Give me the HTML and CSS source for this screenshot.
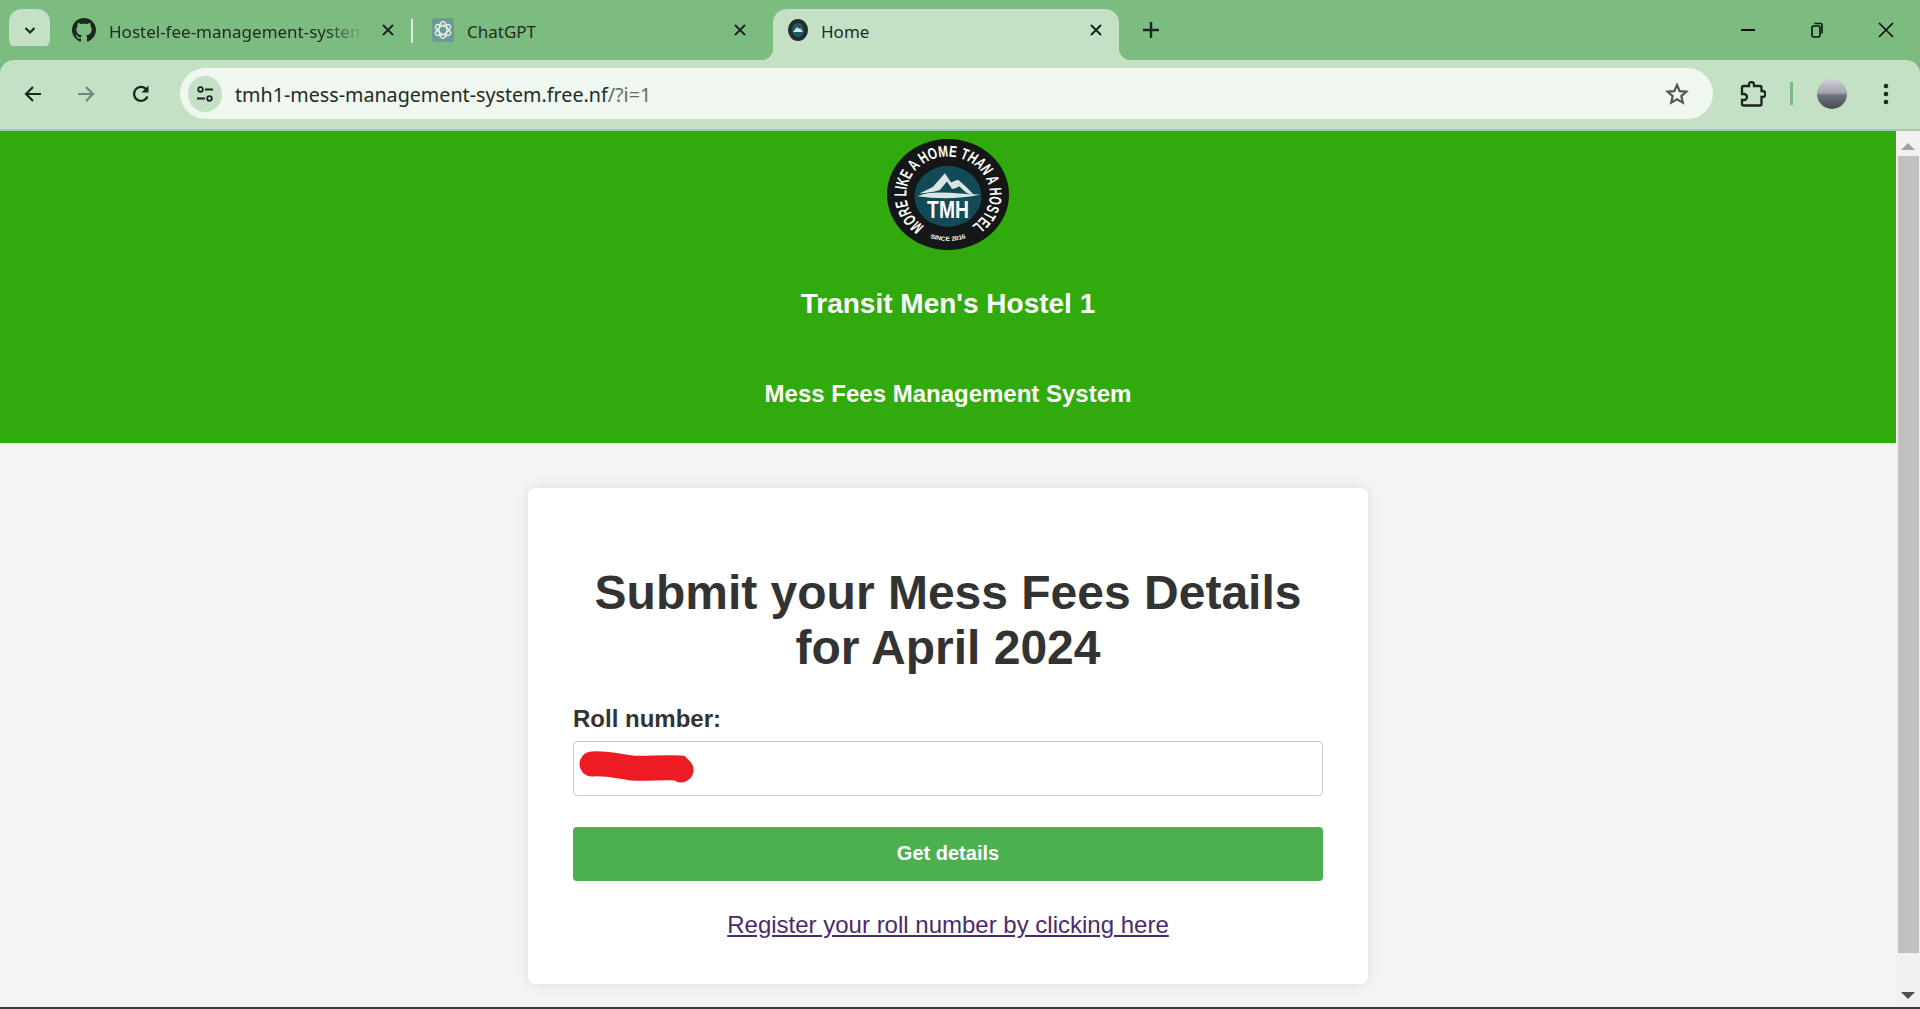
FILE: index.html
```html
<!DOCTYPE html>
<html lang="en">
<head>
    <meta charset="UTF-8">
    <title>Home</title>
    <link rel="stylesheet" href="styles.css">
</head>
<body>
    <div class="tabstrip">
        <div class="tab-search">
            <svg width="14" height="14" viewBox="0 0 14 14"><path d="M2.5 5l4.500 4.500L11.500 5" fill="none" stroke="#1f2a20" stroke-width="2.200"/></svg>
        </div>
        <div class="tab tab-first">
            <svg class="favicon" width="24" height="24" viewBox="0 0 16 16"><path fill="#1d261e" d="M8 0C3.58 0 0 3.580 0 8c0 3.540 2.290 6.530 5.470 7.590.4.070.55-.17.55-.38 0-.19-.01-.82-.01-1.490-2.010.37-2.530-.49-2.690-.94-.09-.23-.48-.94-.82-1.130-.28-.15-.68-.52-.01-.53.63-.01 1.080.58 1.230.82.72 1.210 1.870.87 2.330.66.07-.52.28-.87.51-1.070-1.780-.2-3.640-.89-3.640-3.950 0-.87.31-1.590.82-2.150-.08-.2-.36-1.020.08-2.120 0 0 .67-.21 2.200.82.64-.18 1.320-.27 2-.27.68 0 1.360.09 2 .27 1.530-1.040 2.200-.82 2.200-.82.44 1.100.16 1.920.08 2.120.51.56.82 1.270.82 2.150 0 3.070-1.870 3.750-3.650 3.950.29.25.54.73.54 1.480 0 1.070-.01 1.930-.01 2.200 0 .21.15.46.55.38A8.013 8.013 0 0016 8c0-4.420-3.580-8-8-8z"/></svg>
            <span class="tab-title tab-title-fade">Hostel-fee-management-system</span>
            <svg class="tab-close" width="14" height="14" viewBox="0 0 14 14"><path d="M2 2l10 10M12 2L2 12" stroke="#1d261e" stroke-width="2"/></svg>
        </div>
        <div class="tab-sep"></div>
        <div class="tab tab-second">
            <svg class="favicon" width="22" height="24" viewBox="0 0 22 24">
                <rect width="22" height="24" rx="2" fill="#6d9c95"/>
                <g fill="none" stroke="#e8f3ef" stroke-width="1.300">
                    <ellipse cx="11" cy="12" rx="4" ry="8.500"/>
                    <ellipse cx="11" cy="12" rx="4" ry="8.500" transform="rotate(60 11 12)"/>
                    <ellipse cx="11" cy="12" rx="4" ry="8.500" transform="rotate(120 11 12)"/>
                </g>
            </svg>
            <span class="tab-title">ChatGPT</span>
            <svg class="tab-close" width="14" height="14" viewBox="0 0 14 14"><path d="M2 2l10 10M12 2L2 12" stroke="#1d261e" stroke-width="2"/></svg>
        </div>
        <div class="tab tab-active">
            <svg class="favicon" width="20" height="24" viewBox="0 0 20 24">
                <ellipse cx="10" cy="12" rx="10" ry="11" fill="#222d2c"/>
                <ellipse cx="10" cy="12" rx="6" ry="7" fill="#1f5868"/>
                <path d="M5 14l4-5 2 2 1-1 3 4z" fill="#d5e4e4"/>
            </svg>
            <span class="tab-title">Home</span>
            <svg class="tab-close" width="14" height="14" viewBox="0 0 14 14"><path d="M2 2l10 10M12 2L2 12" stroke="#1d261e" stroke-width="2"/></svg>
        </div>
        <svg class="new-tab" width="18" height="18" viewBox="0 0 18 18"><path d="M9 1v16M1 9h16" stroke="#1d261e" stroke-width="2.400"/></svg>
        <div class="window-controls">
            <svg width="16" height="16" viewBox="0 0 16 16"><path d="M1 8h14" stroke="#111" stroke-width="2"/></svg>
            <svg width="16" height="18" viewBox="0 0 16 18"><path d="M3 6.500a1.500 1.500 0 011.500-1.500h5A1.500 1.500 0 0111 6.500v8a1.500 1.500 0 01-1.500 1.500h-5A1.500 1.500 0 013 14.500zM5.500 2.500h6A1.500 1.500 0 0113 4v8.500" fill="none" stroke="#111" stroke-width="1.600"/></svg>
            <svg width="16" height="16" viewBox="0 0 16 16"><path d="M1 1l14 14M15 1L1 15" stroke="#111" stroke-width="1.700"/></svg>
        </div>
    </div>

    <div class="toolbar">
        <svg class="nav-icon" width="20" height="20" viewBox="0 0 20 20"><path d="M18 10H3M10 3l-7 7 7 7" fill="none" stroke="#1d261e" stroke-width="2.200"/></svg>
        <svg class="nav-icon nav-forward" width="20" height="20" viewBox="0 0 20 20"><path d="M2 10h15M10 3l7 7-7 7" fill="none" stroke="#75857a" stroke-width="2.200"/></svg>
        <svg class="nav-icon nav-reload" width="20" height="20" viewBox="0 0 20 20"><path d="M16.500 12.500A7 7 0 1115 5" fill="none" stroke="#1d261e" stroke-width="2.300"/><path d="M17.500 1.500v7h-7z" fill="#1d261e"/></svg>
        <div class="omnibox">
            <div class="site-info">
                <svg width="18" height="16" viewBox="0 0 18 16"><g fill="none" stroke="#1d261e" stroke-width="1.800"><circle cx="4.500" cy="3.500" r="2.300"/><circle cx="13.500" cy="12.500" r="2.300"/><path d="M9 3.500h8M1 12.500h8"/></g></svg>
            </div>
            <div class="url">tmh1-mess-management-system.free.nf<span class="url-path">/?i=1</span></div>
            <svg class="star" width="24" height="24" viewBox="0 0 24 24"><path d="M12 3l2.700 6.100 6.600.6-5 4.400 1.500 6.500L12 17.200l-5.800 3.400 1.500-6.500-5-4.400 6.600-.6z" fill="none" stroke="#4f5a52" stroke-width="2.200"/></svg>
        </div>
        <svg class="ext" width="26" height="26" viewBox="0 0 26 26"><path d="M3.500 5H9V3.500a2.500 2.500 0 015 0V5h6a1.500 1.500 0 011.500 1.500V10h1a3 3 0 010 6h-1v7a1.500 1.500 0 01-1.500 1.500H3.500A1.500 1.500 0 012 23v-4h2a3 3 0 000-6H2V6.500A1.500 1.500 0 013.500 5z" fill="none" stroke="#1d261e" stroke-width="2.300"/></svg>
        <div class="toolbar-sep"></div>
        <div class="avatar"></div>
        <svg class="menu" width="6" height="24" viewBox="0 0 6 24"><circle cx="3" cy="4" r="2.300"/><circle cx="3" cy="12" r="2.300"/><circle cx="3" cy="20" r="2.300"/></svg>
    </div>

    <div class="viewport">
        <div class="page">
            <header class="site-header">
                <svg class="logo" width="122" height="111" viewBox="0 0 120 120" preserveAspectRatio="none">
                    <defs>
                        <path id="ring" d="M37 94A41 41 0 1 1 83 94"/>
                        <path id="ring-low" d="M36 104A50 50 0 0 0 84 104"/>
                    </defs>
                    <circle cx="60" cy="60" r="60" fill="#141617"/>
                    <circle cx="60" cy="62" r="33" fill="#134a57"/>
                    <text class="logo-ring"><textPath href="#ring" textLength="208" lengthAdjust="spacingAndGlyphs">MORE LIKE A HOME THAN A HOSTEL</textPath></text>
                    <text class="logo-since"><textPath href="#ring-low" startOffset="50%" text-anchor="middle">SINCE 2016</textPath></text>
                    <path d="M32 59l13-7 12-15 6 10 4-2 3-1 9 9 7 8-8-3-7-7-3 2-4 1-5-8-7 9-6 2-7 1z" fill="#d9e6e6"/>
                    <path d="M30 62c15-8 40-2 62-2-20 5-42 5-62 2z" fill="#d9e6e6"/>
                    <text class="logo-tmh" transform="translate(60 85) scale(1 1.400)" text-anchor="middle">TMH</text>
                </svg>
                <h1 class="hostel-name">Transit Men's Hostel 1</h1>
                <h2 class="system-name">Mess Fees Management System</h2>
            </header>

            <form class="card">
                <h2 class="card-title">Submit your Mess Fees Details<br>for April 2024</h2>
                <label class="field-label" for="roll">Roll number:</label>
                <div class="field">
                    <input class="field-input" id="roll" type="text">
                    <svg class="scribble" width="120" height="34" viewBox="0 0 120 34"><path d="M13 13c15-1 25 2 40 4 15 1 30-1 47 0l2 2" fill="none" stroke="#ed1c24" stroke-width="25" stroke-linecap="round"/></svg>
                </div>
                <button class="submit" type="button">Get details</button>
                <a class="register" href="#">Register your roll number by clicking here</a>
            </form>
        </div>

        <div class="scrollbar">
            <div class="arrow-up"></div>
            <div class="thumb"></div>
            <div class="arrow-down"></div>
        </div>
    </div>
    <div class="screen-edge"></div>
</body>
</html>
```

FILE: styles.css
```css
* {
    margin: 0;
    padding: 0;
    box-sizing: border-box;
}

html, body {
    height: 100%;
    overflow: hidden;
}

body {
    display: flex;
    flex-direction: column;
    background-color: #f4f4f4;
    font-family: "Liberation Sans", Arial, sans-serif;
}

/* tab strip */
.tabstrip {
    display: flex;
    align-items: flex-start;
    flex: none;
    height: 60px;
    padding: 9px 0 0 9px;
    background-color: #7cbc80;
}

.tab-search {
    display: flex;
    align-items: center;
    justify-content: center;
    flex: none;
    width: 41px;
    height: 42px;
    border-radius: 13px;
    background-color: #c4e1c5;
}

.tab {
    position: relative;
    display: flex;
    align-items: center;
    flex: none;
    height: 51px;
    padding-bottom: 9px;
    color: #222c24;
    font-family: "Noto Sans", sans-serif;
    font-size: 17px;
}

.tab-first {
    width: 361px;
    padding-left: 22px;
}

.tab-sep {
    flex: none;
    width: 2px;
    height: 24px;
    margin-top: 10px;
    background-color: #dcebdc;
}

.tab-second {
    width: 360px;
    padding-left: 19px;
}

.tab-second .tab-close {
    margin-right: 26px;
}

.tab-active {
    width: 346px;
    padding-left: 15px;
    border-radius: 14px 14px 0 0;
    background-color: #c4e1c5;
}

.tab-active::before,
.tab-active::after {
    content: "";
    position: absolute;
    bottom: 0;
    width: 12px;
    height: 12px;
}

.tab-active::before {
    left: -12px;
    background: radial-gradient(circle at 0 0, transparent 12px, #c4e1c5 12.500px);
}

.tab-active::after {
    right: -12px;
    background: radial-gradient(circle at 100% 0, transparent 12px, #c4e1c5 12.500px);
}

.favicon {
    flex: none;
}

.tab-title {
    flex: 1;
    min-width: 0;
    margin-left: 13px;
    padding-top: 2px;
    overflow: hidden;
    white-space: nowrap;
}

.tab-title-fade {
    -webkit-mask-image: linear-gradient(to right, #000 85%, transparent);
    mask-image: linear-gradient(to right, #000 85%, transparent);
}

.tab-close {
    flex: none;
    margin: 0 16px 0 18px;
}

.new-tab {
    flex: none;
    margin: 12px 0 0 23px;
}

.window-controls {
    display: flex;
    align-items: center;
    gap: 53px;
    margin: 12px 26px 0 auto;
}

/* toolbar */
.toolbar {
    display: flex;
    align-items: center;
    flex: none;
    height: 71px;
    padding: 0 0 2px 23px;
    border-bottom: 2px solid #a9c5aa;
    border-radius: 14px 14px 0 0;
    background-color: #c4e1c5;
    box-shadow: 0 -14px 0 #7cbc80;
}

.nav-icon {
    flex: none;
}

.nav-forward {
    margin-left: 33px;
}

.nav-reload {
    margin-left: 35px;
}

.omnibox {
    display: flex;
    align-items: center;
    flex: none;
    width: 1533px;
    height: 51px;
    margin-left: 29px;
    padding: 0 24px 0 8px;
    border-radius: 26px;
    background-color: #eff7f0;
}

.site-info {
    display: flex;
    align-items: center;
    justify-content: center;
    flex: none;
    width: 34px;
    height: 36px;
    border-radius: 50%;
    background-color: #c4e1c5;
}

.url {
    flex: 1;
    margin-left: 13px;
    padding-top: 2px;
    color: #222c24;
    font-family: "Noto Sans", sans-serif;
    font-size: 19.700px;
}

.url-path {
    color: #5f6b62;
}

.star {
    flex: none;
}

.ext {
    flex: none;
    margin-left: 27px;
}

.toolbar-sep {
    flex: none;
    width: 3px;
    height: 23px;
    margin-left: 24px;
    background-color: #7cbc80;
}

.avatar {
    flex: none;
    width: 30px;
    height: 30px;
    margin-left: 24px;
    border-radius: 50%;
    background: linear-gradient(#d0d0d6, #a4a5ae 45%, #6d727a 55%, #474c53);
}

.menu {
    flex: none;
    margin-left: 36px;
    fill: #1d261e;
}

/* page */
.viewport {
    display: flex;
    flex: 1;
    min-height: 0;
}

.page {
    flex: 1;
    min-width: 0;
    overflow: hidden;
}

.site-header {
    height: 312px;
    padding-top: 8px;
    background-color: #31aa0e;
    color: #fff;
    text-align: center;
}

.logo {
    display: block;
    margin: 0 auto;
}

.logo-ring {
    fill: #fff;
    font-size: 17px;
    font-weight: bold;
}

.logo-since {
    fill: #fff;
    font-size: 6.500px;
    font-weight: bold;
}

.logo-tmh {
    fill: #fff;
    font-size: 19px;
    font-weight: bold;
}

.hostel-name {
    margin-top: 38px;
    font-size: 28px;
    line-height: 32px;
}

.system-name {
    margin-top: 60px;
    font-size: 24px;
    line-height: 28px;
}

.card {
    display: flex;
    flex-direction: column;
    width: 840px;
    height: 496px;
    margin: 45px auto 0;
    padding: 77px 45px 0;
    border-radius: 8px;
    background-color: #fff;
    box-shadow: 0 0 14px rgba(0, 0, 0, .1);
}

.card-title {
    color: #333;
    font-size: 48px;
    line-height: 55px;
    text-align: center;
}

.field-label {
    margin-top: 30px;
    color: #333;
    font-size: 24px;
    font-weight: bold;
    line-height: 28px;
}

.field {
    position: relative;
    margin-top: 8px;
}

.field-input {
    display: block;
    width: 100%;
    height: 55px;
    border: 1px solid #ccc;
    border-radius: 4px;
    background-color: #fff;
}

.scribble {
    position: absolute;
    left: 6px;
    top: 10px;
}

.submit {
    height: 54px;
    margin-top: 31px;
    padding-bottom: 2px;
    border: none;
    border-radius: 4px;
    background-color: #4caf50;
    color: #fff;
    font-family: inherit;
    font-size: 20px;
    font-weight: bold;
}

.register {
    margin-top: 30px;
    color: #4a2a72;
    font-size: 24px;
    line-height: 28px;
    text-align: center;
}

/* scrollbar */
.scrollbar {
    display: flex;
    flex-direction: column;
    align-items: center;
    flex: none;
    width: 24px;
    background-color: #f1f1f1;
}

.arrow-up {
    flex: none;
    width: 0;
    height: 0;
    margin-top: 12px;
    border: 7px solid transparent;
    border-top: none;
    border-bottom: 7px solid #a3a3a3;
}

.thumb {
    flex: none;
    width: 21px;
    height: 797px;
    margin-top: 6px;
    background-color: #c1c1c1;
}

.arrow-down {
    flex: none;
    width: 0;
    height: 0;
    margin-top: 39px;
    border: 7px solid transparent;
    border-bottom: none;
    border-top: 7px solid #505050;
}

.screen-edge {
    flex: none;
    height: 2px;
    background-color: #3c3c3c;
}
```
